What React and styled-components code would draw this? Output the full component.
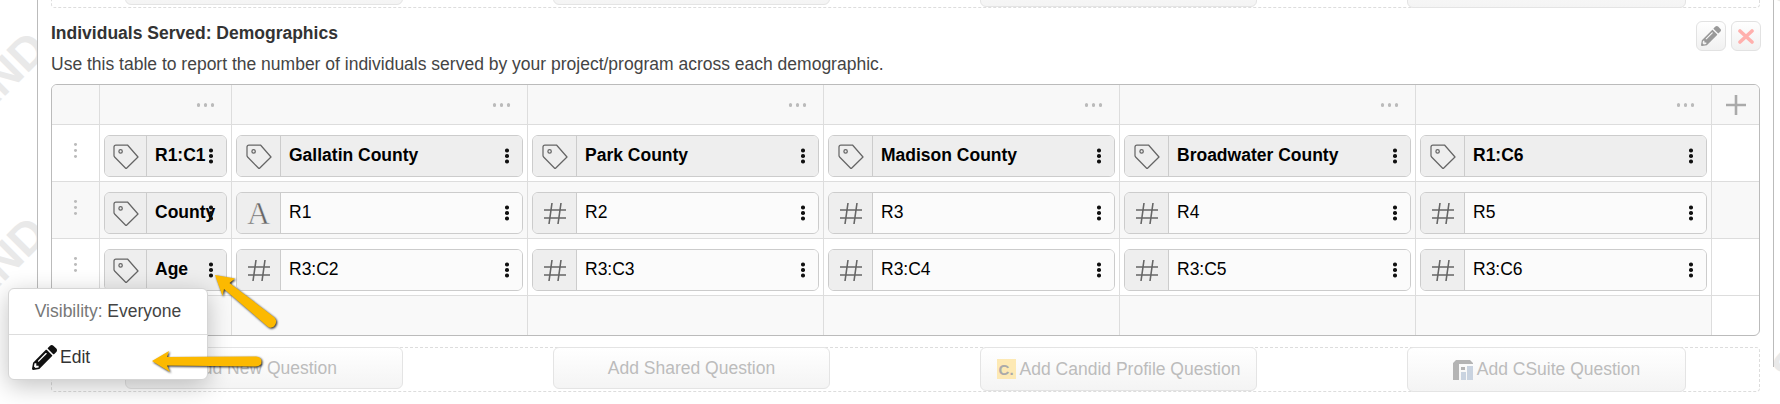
import React from "react";
import styled, { createGlobalStyle } from "styled-components";
import { FaPencilAlt } from "react-icons/fa";

const Global = createGlobalStyle`
  html, body { margin: 0; padding: 0; background: #fff; overflow: hidden; }
  * { box-sizing: border-box; }
  body { font-family: "Liberation Sans", Arial, sans-serif; font-size: 17.5px; }
`;

const Stage = styled.div`
  position: relative;
  width: 1780px;
  height: 404px;
  overflow: hidden;
  background: #fff;
`;

const Watermark = styled.span`
  position: absolute;
  left: ${(p) => p.$x}px;
  top: ${(p) => p.$y}px;
  font-size: 46px;
  line-height: 46px;
  font-weight: 700;
  color: #e9e9e9;
  white-space: nowrap;
  transform: rotate(-45deg);
  transform-origin: left top;
`;

const Panel = styled.main`
  position: relative;
  margin-left: 37px;
  width: 1737px;
  height: 404px;
  padding: 0 13px;
  background: #fff;
  border-left: 1px solid #bbb;
  border-right: 1px solid #bbb;
`;

const AddRow = styled.div`
  display: flex;
  align-items: flex-start;
  gap: 150px;
  height: 45px;
  padding-left: 73px;
  margin-top: ${(p) => p.$mt || 0}px;
  border: 1px dashed #ddd;
  border-radius: 4px;
`;

const AddButton = styled.div`
  display: flex;
  align-items: center;
  justify-content: center;
  gap: 4px;
  flex: none;
  width: ${(p) => p.$w}px;
  height: ${(p) => p.$h}px;
  margin-top: -1px;
  color: #bcbcbc;
  background: linear-gradient(#fff, #f4f4f4);
  border: 1px solid #e4e4e4;
  border-radius: 6px;
  white-space: nowrap;
`;

const CandidBadge = styled.span`
  display: flex;
  align-items: center;
  justify-content: center;
  width: 19px;
  height: 20px;
  background: #fde9b4;
  color: #aaa;
  font-size: 15px;
  font-weight: 700;
`;

const Heading = styled.header`
  display: flex;
  justify-content: space-between;
  align-items: flex-start;
  height: 76px;
  padding-top: 13px;
`;

const HeadingText = styled.div`
  padding-top: 2px;
`;

const Title = styled.h3`
  margin: 0 0 11px;
  font-size: 17.5px;
  line-height: 20px;
  font-weight: 700;
  color: #333;
`;

const Description = styled.p`
  margin: 0;
  font-size: 17.5px;
  line-height: 20px;
  color: #444;
`;

const Actions = styled.div`
  display: flex;
  gap: 5px;
  margin-right: -1px;
`;

const ActionButton = styled.div`
  display: flex;
  align-items: center;
  justify-content: center;
  width: 30px;
  height: 30px;
  background: linear-gradient(#fff, #f1f1f1);
  border: 1px solid #e2e2e2;
  border-radius: 6px;
  color: #999;
`;

const Table = styled.div`
  width: 1709px;
  height: 252px;
  margin-bottom: 11px;
  background: #fff;
  border: 1px solid #bbb;
  border-radius: 6px;
  overflow: hidden;
`;

const Row = styled.div`
  display: grid;
  grid-template-columns: 48px 132px repeat(5, 296px) 47px;
  height: ${(p) => p.$h}px;
  background: ${(p) => p.$bg || "transparent"};
  border-bottom: ${(p) => (p.$last ? "none" : "1px solid #ddd")};
`;

const Cell = styled.div`
  position: relative;
  border-right: ${(p) => (p.$end ? "none" : "1px solid #ddd")};
  background: ${(p) => p.$bg || "transparent"};
`;

const HeaderCell = styled(Cell)`
  display: flex;
  align-items: center;
  justify-content: flex-end;
  padding-right: 17px;
  padding-top: 1px;
`;

const PlusCell = styled(Cell)`
  display: flex;
  align-items: center;
  justify-content: center;
  color: #aaa;
`;

const HandleCell = styled(Cell)`
  display: flex;
  justify-content: center;
  padding-top: 18px;
`;

const DataCell = styled(Cell)`
  padding: 10px 4px 0 4px;
`;

const HDots = styled.span`
  display: flex;
  gap: 3.5px;
  & > i {
    width: 3.5px;
    height: 3.5px;
    border-radius: 50%;
    background: #bbb;
  }
`;

const VDots = styled.span`
  display: flex;
  flex-direction: column;
  gap: 2.5px;
  height: 15px;
  & > i {
    width: 3.5px;
    height: 3.5px;
    border-radius: 50%;
    background: #bbb;
  }
`;

const Group = styled.div`
  position: relative;
  display: flex;
  height: 42px;
  border: 1px solid #ccc;
  border-radius: 6px;
  overflow: hidden;
`;

const Addon = styled.div`
  display: flex;
  align-items: center;
  justify-content: center;
  flex: none;
  width: ${(p) => p.$w}px;
  background: #eee;
  border-right: 1px solid #ccc;
  color: #666;
`;

const LetterIcon = styled.span`
  font-family: "Liberation Serif", serif;
  font-size: 32px;
  line-height: 32px;
  font-weight: 400;
  color: #666;
  -webkit-text-stroke: 0.5px #eee;
`;

const Label = styled.div`
  flex: 1;
  display: flex;
  align-items: center;
  padding-left: 8px;
  padding-bottom: 2px;
  background: ${(p) => (p.$bold ? "#eee" : "#fbfbfb")};
  color: #000;
  font-size: 17.5px;
  font-weight: ${(p) => (p.$bold ? 700 : 400)};
  white-space: nowrap;
`;

const Kebab = styled.span`
  position: absolute;
  top: 50%;
  right: 13px;
  width: 3.6px;
  height: 3.6px;
  margin-top: -1.8px;
  border-radius: 50%;
  background: #111;
  box-shadow: 0 -5.5px 0 #111, 0 5.5px 0 #111;
`;

const Popup = styled.div`
  position: absolute;
  left: 8px;
  top: 288px;
  width: 200px;
  height: 92px;
  background: #fff;
  border: 1px solid #d5d5d5;
  border-radius: 6px;
  box-shadow: 0 6px 24px rgba(0, 0, 0, 0.24);
  z-index: 3;
`;

const PopupHead = styled.div`
  display: flex;
  align-items: center;
  justify-content: center;
  gap: 4.8px;
  height: 46px;
  border-bottom: 1px solid #ddd;
  color: #444;
  & > span {
    color: #777;
  }
`;

const PopupItem = styled.div`
  display: flex;
  align-items: center;
  gap: 3px;
  height: 44px;
  padding-left: 23px;
  color: #333;
`;

const ArrowLayer = styled.svg`
  position: absolute;
  left: 0;
  top: 0;
  z-index: 4;
  filter: drop-shadow(1.5px 1.5px 1px rgba(0, 0, 0, 0.85));
`;

const TagIcon = () => (
  <svg width="26" height="25" viewBox="0 0 26 25" fill="none" stroke="#666" strokeWidth="1.25">
    <path d="M1 3a2 2 0 0 1 2-2h11.5l10.5 12-11.2 11a1 1 0 0 1-1.4 0L1.6 13a2 2 0 0 1-.6-1.4z" strokeLinejoin="round" />
    <circle cx="7.6" cy="7.4" r="1.7" />
  </svg>
);

const HashIcon = () => (
  <svg width="24" height="23" viewBox="0 0 24 23" fill="none" stroke="#666" strokeWidth="1.6">
    <path d="M1 8h22M1 16h22M9 1 6 22M18 1l-3 21" />
  </svg>
);

const PlusIcon = () => (
  <svg width="20" height="20" viewBox="0 0 20 20" fill="none" stroke="currentColor" strokeWidth="2.6">
    <path d="M10 0v20M0 10h20" />
  </svg>
);

const CloseIcon = () => (
  <svg width="16" height="15" viewBox="0 0 16 15" fill="none" stroke="#ffb0ad" strokeWidth="3.6" strokeLinecap="round">
    <path d="M2 2l12 11M14 2 2 13" />
  </svg>
);

const CSuiteIcon = () => (
  <svg width="20" height="20" viewBox="0 0 20 20">
    <path d="M0 3 3 0h14l3 3v1H6v16H0z" fill="#b4b4b4" />
    <path d="M8 7h4v3H8z" fill="#b4b4b4" />
    <path d="M14 6h6v14h-6zM8 12h5v8H8z" fill="#c9d3e0" />
  </svg>
);

const Dots3H = () => (
  <HDots>
    <i />
    <i />
    <i />
  </HDots>
);

const Dots3V = () => (
  <VDots>
    <i />
    <i />
    <i />
  </VDots>
);

const Field = ({ type, text, bold, narrow }) => (
  <Group>
    <Addon $w={narrow ? 42 : 44}>
      {type === "tag" && <TagIcon />}
      {type === "hash" && <HashIcon />}
      {type === "text" && <LetterIcon>A</LetterIcon>}
    </Addon>
    <Label $bold={bold}>{text}</Label>
    <Kebab />
  </Group>
);

const AddButtons = () => (
  <>
    <AddButton $w={278} $h={42}>Add New Question</AddButton>
    <AddButton $w={277} $h={42}>Add Shared Question</AddButton>
    <AddButton $w={277} $h={44}>
      <CandidBadge>C.</CandidBadge>
      Add Candid Profile Question
    </AddButton>
    <AddButton $w={279} $h={45}>
      <CSuiteIcon />
      Add CSuite Question
    </AddButton>
  </>
);

const rows = [
  {
    bg: "#fff",
    cells: [
      ["tag", "R1:C1", true],
      ["tag", "Gallatin County", true],
      ["tag", "Park County", true],
      ["tag", "Madison County", true],
      ["tag", "Broadwater County", true],
      ["tag", "R1:C6", true],
    ],
  },
  {
    bg: "#f8f8f8",
    cells: [
      ["tag", "County", true],
      ["text", "R1", false],
      ["hash", "R2", false],
      ["hash", "R3", false],
      ["hash", "R4", false],
      ["hash", "R5", false],
    ],
  },
  {
    bg: "#fff",
    cells: [
      ["tag", "Age", true],
      ["hash", "R3:C2", false],
      ["hash", "R3:C3", false],
      ["hash", "R3:C4", false],
      ["hash", "R3:C5", false],
      ["hash", "R3:C6", false],
    ],
  },
];

export default function App() {
  const cols = [0, 1, 2, 3, 4, 5];
  return (
    <Stage>
      <Global />
      <Watermark $x={-48} $y={94}>AND</Watermark>
      <Watermark $x={-48} $y={279}>AND</Watermark>
      <Watermark $x={1763} $y={360}>S</Watermark>
      <Watermark $x={1763} $y={-10}>S</Watermark>
      <Panel>
        <AddRow $mt={-37}>
          <AddButtons />
        </AddRow>
        <Heading>
          <HeadingText>
            <Title>Individuals Served: Demographics</Title>
            <Description>
              Use this table to report the number of individuals served by your project/program across each demographic.
            </Description>
          </HeadingText>
          <Actions>
            <ActionButton>
              <FaPencilAlt size={20} />
            </ActionButton>
            <ActionButton>
              <CloseIcon />
            </ActionButton>
          </Actions>
        </Heading>
        <Table>
          <Row $h={40} $bg="#f8f8f8">
            <Cell />
            {cols.map((c) => (
              <HeaderCell key={c}>
                <Dots3H />
              </HeaderCell>
            ))}
            <PlusCell $end>
              <PlusIcon />
            </PlusCell>
          </Row>
          {rows.map((r, i) => (
            <Row key={i} $h={57} $bg={r.bg}>
              <HandleCell>
                <Dots3V />
              </HandleCell>
              {r.cells.map(([type, text, bold], j) => (
                <DataCell key={j}>
                  <Field type={type} text={text} bold={bold} narrow={j === 0} />
                </DataCell>
              ))}
              <Cell $end />
            </Row>
          ))}
          <Row $h={39} $last>
            <Cell $bg="#f9f9f9" />
            {cols.map((c) => (
              <Cell key={c} $bg="#f9f9f9" />
            ))}
            <Cell $end />
          </Row>
        </Table>
        <AddRow>
          <AddButtons />
        </AddRow>
      </Panel>
      <Popup>
        <PopupHead>
          <span>Visibility:</span> Everyone
        </PopupHead>
        <PopupItem>
          <FaPencilAlt size={25} color="#111" />
          <span>Edit</span>
        </PopupItem>
      </Popup>
      <ArrowLayer width="300" height="404" viewBox="0 0 300 404">
        <path d="M215 275 235 278.5 229.5 283 274.5 317.5Q278 322 274 326.5 270 329 267 326L224 289 222.5 296z" fill="#fcb900" />
        <path d="M152 361 169 351 167 357 256 356.5Q261.5 357 261.5 361.5 261.5 366 256 366.5L167 365.5 170 372z" fill="#fcb900" />
      </ArrowLayer>
    </Stage>
  );
}
